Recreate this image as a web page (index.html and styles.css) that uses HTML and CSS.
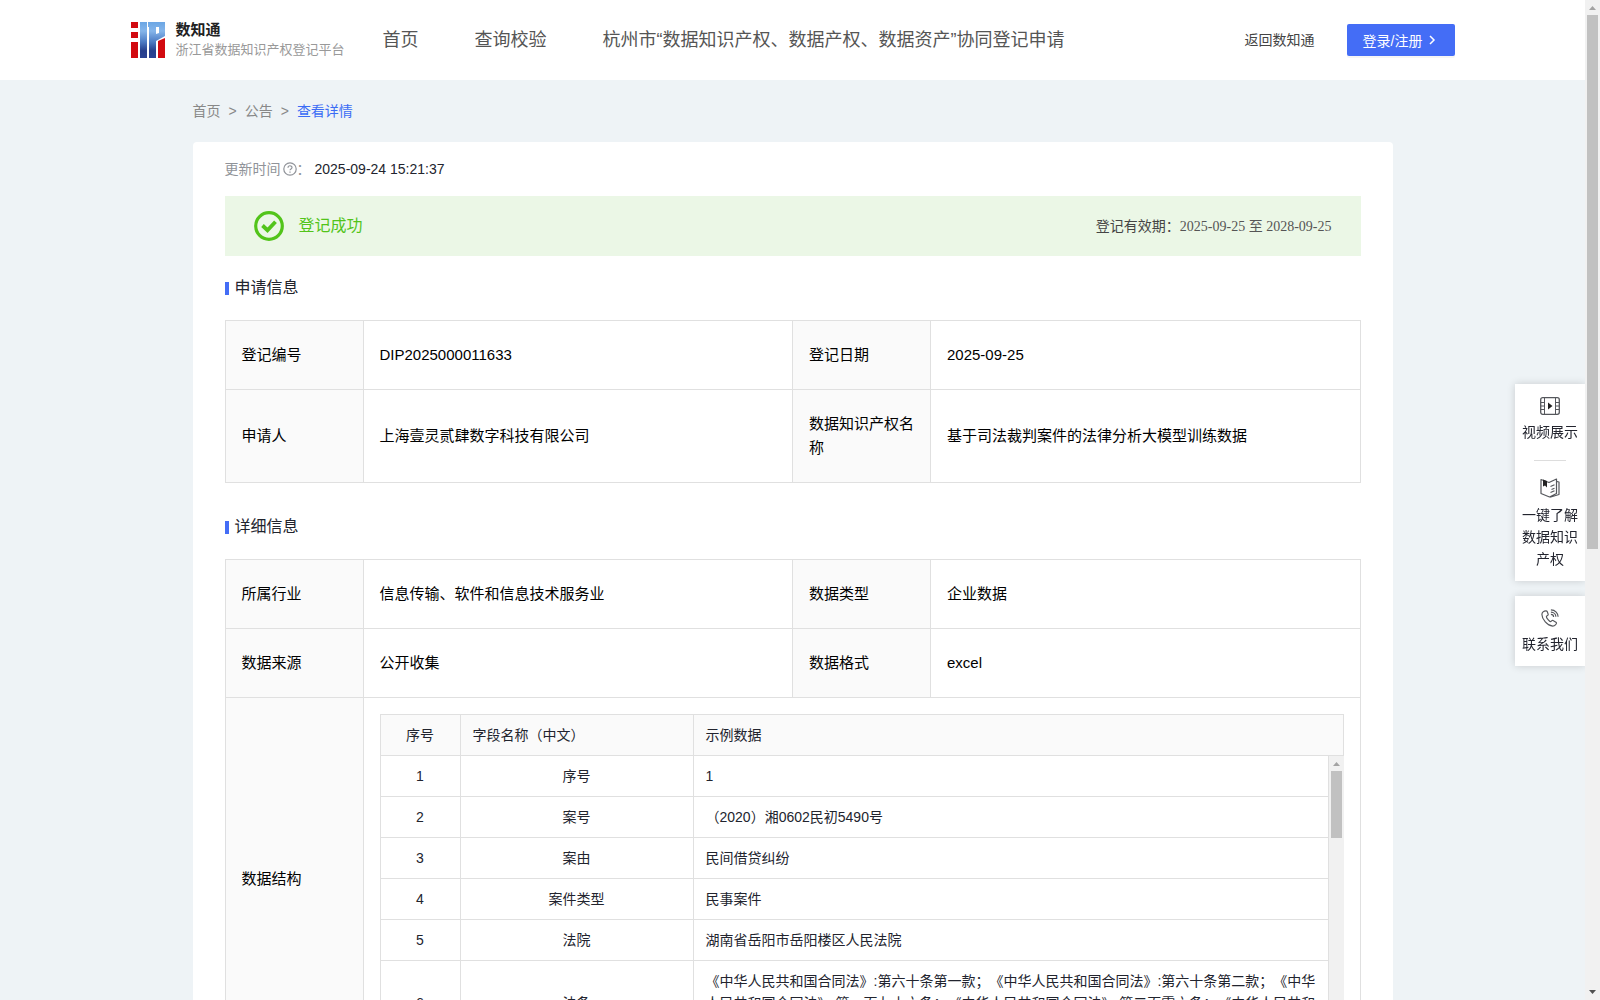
FILE: index.html
```html
<!DOCTYPE html>
<html lang="zh-CN">
<head>
    <meta charset="UTF-8">
    <meta name="viewport" content="width=device-width, initial-scale=1.0">
    <title>数知通</title>
    <link rel="stylesheet" href="styles.css">
</head>
<body>
    <div class="page">
        <header class="header">
            <div class="header-inner">
                <a class="logo" href="#">
                    <svg width="34" height="36" viewBox="0 0 34 36">
                        <defs>
                            <linearGradient id="logoBlue" x1="0" y1="0" x2="0" y2="1">
                                <stop offset="0" stop-color="#6ba6e4"/>
                                <stop offset="0.25" stop-color="#85b5ea"/>
                                <stop offset="0.55" stop-color="#4d7cc4"/>
                                <stop offset="0.8" stop-color="#263f8c"/>
                                <stop offset="1" stop-color="#2b4394"/>
                            </linearGradient>
                        </defs>
                        <path fill="#d20a10" d="M0 0h7v6H0zM0 10h7v6H0zM0 20h7v16H0zM27 19l7-3v20h-7z"/>
                        <path fill="url(#logoBlue)" fill-rule="evenodd" d="M9 0h7v36H9zM17 0h17v14l-9 5v17h-7V5h-1zM25 5v7l3-1V5z"/>
                    </svg>
                    <span class="logo-text">
                        <strong>数知通</strong>
                        <span>浙江省数据知识产权登记平台</span>
                    </span>
                </a>
                <nav class="nav">
                    <a href="#">首页</a>
                    <a href="#">查询校验</a>
                    <a href="#">杭州市“数据知识产权、数据产权、数据资产”协同登记申请</a>
                </nav>
                <a class="back-link" href="#">返回数知通</a>
                <button class="login-btn" type="button">
                    登录/注册
                    <svg width="12" height="12" viewBox="0 0 12 12" fill="none" stroke="#fff" stroke-width="1.5"><path d="M4 2l4 4-4 4"/></svg>
                </button>
            </div>
        </header>

        <main class="container">
            <nav class="breadcrumb">
                <a href="#">首页</a>
                <span>&gt;</span>
                <a href="#">公告</a>
                <span>&gt;</span>
                <a class="current" href="#">查看详情</a>
            </nav>

            <div class="card">
                <div class="update-time">
                    <span>更新时间</span>
                    <svg width="14" height="14" viewBox="0 0 14 14" fill="none" stroke="#909399" stroke-width="1.2"><circle cx="7" cy="7" r="6.2"/><path d="M5 5.7c0-2.6 4-2.5 4-.2 0 1.4-2 1.4-2 2.8M7 9.4v1.4"/></svg>
                    <span>：</span>
                    <time>2025-09-24 15:21:37</time>
                </div>

                <div class="banner">
                    <svg width="30" height="30" viewBox="0 0 30 30" fill="none" stroke="#52c41a"><circle cx="15" cy="15" r="13.3" stroke-width="3.2"/><path d="M8.500 14.500l5 4.700 8-8.400" stroke-width="3.8"/></svg>
                    <span class="banner-status">登记成功</span>
                    <span class="banner-date">登记有效期：<span class="serif">2025-09-25 至 2028-09-25</span></span>
                </div>

                <h2 class="section-title">申请信息</h2>
                <table class="info-table">
                    <colgroup><col class="col-label"><col><col class="col-label"><col></colgroup>
                    <tr>
                        <th>登记编号</th>
                        <td>DIP2025000011633</td>
                        <th>登记日期</th>
                        <td>2025-09-25</td>
                    </tr>
                    <tr>
                        <th>申请人</th>
                        <td>上海壹灵贰肆数字科技有限公司</td>
                        <th>数据知识产权名称</th>
                        <td>基于司法裁判案件的法律分析大模型训练数据</td>
                    </tr>
                </table>

                <h2 class="section-title">详细信息</h2>
                <table class="info-table">
                    <colgroup><col class="col-label"><col><col class="col-label"><col></colgroup>
                    <tr>
                        <th>所属行业</th>
                        <td>信息传输、软件和信息技术服务业</td>
                        <th>数据类型</th>
                        <td>企业数据</td>
                    </tr>
                    <tr>
                        <th>数据来源</th>
                        <td>公开收集</td>
                        <th>数据格式</th>
                        <td>excel</td>
                    </tr>
                    <tr>
                        <th>数据结构</th>
                        <td class="nested" colspan="3">
                            <table class="data-table">
                                <colgroup><col class="col-no"><col class="col-field"><col></colgroup>
                                <thead>
                                    <tr><th class="center">序号</th><th>字段名称（中文）</th><th>示例数据</th></tr>
                                </thead>
                            </table>
                            <div class="data-body">
                                <div class="data-rows">
                                    <table class="data-table">
                                        <colgroup><col class="col-no"><col class="col-field"><col></colgroup>
                                        <tbody>
                                            <tr><td>1</td><td>序号</td><td>1</td></tr>
                                            <tr><td>2</td><td>案号</td><td>（2020）湘0602民初5490号</td></tr>
                                            <tr><td>3</td><td>案由</td><td>民间借贷纠纷</td></tr>
                                            <tr><td>4</td><td>案件类型</td><td>民事案件</td></tr>
                                            <tr><td>5</td><td>法院</td><td>湖南省岳阳市岳阳楼区人民法院</td></tr>
                                            <tr><td>6</td><td>法条</td><td>《中华人民共和国合同法》:第六十条第一款；《中华人民共和国合同法》:第六十条第二款；《中华人民共和国合同法》:第一百九十六条；《中华人民共和国合同法》:第二百零六条；《中华人民共和国合同法》:第二百零七条</td></tr>
                                        </tbody>
                                    </table>
                                </div>
                                <div class="scrollbar" aria-hidden="true">
                                    <svg width="7" height="4" viewBox="0 0 7 4" fill="#a3a3a3"><path d="M0 4h7L3.500 0z"/></svg>
                                    <div class="track"><div class="thumb thumb-data"></div></div>
                                    <svg width="7" height="4" viewBox="0 0 7 4" fill="#505050"><path d="M0 0h7L3.500 4z"/></svg>
                                </div>
                            </div>
                        </td>
                    </tr>
                </table>
            </div>
        </main>
    </div>

    <div class="scrollbar" aria-hidden="true">
        <svg width="7" height="4" viewBox="0 0 7 4" fill="#a3a3a3"><path d="M0 4h7L3.500 0z"/></svg>
        <div class="track"><div class="thumb thumb-page"></div></div>
        <svg width="7" height="4" viewBox="0 0 7 4" fill="#505050"><path d="M0 0h7L3.500 4z"/></svg>
    </div>

    <aside class="side-tools">
        <div class="side-group">
            <a href="#">
                <svg width="20" height="18" viewBox="0 0 20 18" fill="none" stroke="#55575c"><rect x="0.7" y="0.7" width="18.6" height="16.6" rx="2" stroke-width="1.3"/><path d="M4.5 1v16M15.5 1v16M1 5.5h3.5M1 9h3.5M1 12.5h3.5M15.5 5.5H19M15.5 9H19M15.5 12.5H19"/><path d="M8 5.5v7l4.500-3.500z" fill="#222" stroke="none"/></svg>
                <span>视频展示</span>
            </a>
            <hr>
            <a href="#">
                <svg width="20" height="20" viewBox="0 0 20 20" fill="none" stroke="#55575c" stroke-width="1.2" stroke-linejoin="round"><path d="M1 1.500l8 3 7.500-3.500v14.500L9.500 19 1 15.500zM17 3.500l2 .5v12.500L10 19.300"/><path d="M10.500 8.500l4-1.700M11.500 11.500l3-1.200M10.500 14.500l4-1.700"/><path d="M3 1.500l4 1.500v6.500L5 7.500 3 8.500z" fill="#222" stroke="none"/></svg>
                <span>一键了解数据知识产权</span>
            </a>
        </div>
        <div class="side-group">
            <a href="#">
                <svg width="18" height="18" viewBox="0 0 20 20" fill="none" stroke="#55575c" stroke-width="1.3"><path d="M5.500 2C3 2 1 4 1 6c0 5 6 12.500 12 13 2.500 0 5-3 4-4l-4-2.500c-1 0-1.500 1.500-2.500 1.500S6 10 6 8.500C6.200 7.500 8 7.500 8 6L7 3C6.700 2.200 6.200 2 5.500 2z"/><path d="M11 1c5 0 8 4 8 7.500M11 3.500c3.500 0 5.500 2.500 5.500 5M11 6c2 0 3 1.500 3 3"/></svg>
                <span>联系我们</span>
            </a>
        </div>
    </aside>
</body>
</html>
```
FILE: styles.css
```css
* {
    box-sizing: border-box;
}
body {
    display: flex;
    height: 100vh;
    margin: 0;
    background-color: #eef3f6;
    color: #22242e;
    font-family: "Liberation Sans", "Noto Sans CJK SC", sans-serif;
    font-size: 14px;
    line-height: 22px;
    text-spacing-trim: space-all;
}
a {
    color: inherit;
    text-decoration: none;
}
svg {
    flex: none;
}
.page {
    flex: 1;
    min-width: 0;
    overflow-y: auto;
    scrollbar-width: none;
}
.header {
    background-color: #fff;
}
.header-inner {
    display: flex;
    align-items: center;
    max-width: 1324px;
    height: 80px;
    margin: 0 auto;
}
.logo {
    display: flex;
    align-items: center;
    gap: 11px;
}
.logo-text {
    display: flex;
    flex-direction: column;
    font-size: 13px;
    line-height: 20px;
    color: #999;
}
.logo-text strong {
    font-size: 15px;
    color: #222;
}
.nav {
    display: flex;
    flex: 1;
    gap: 56px;
    margin-left: 38px;
    font-size: 18px;
    color: #555;
}
.back-link {
    color: #444;
}
.login-btn {
    display: flex;
    align-items: center;
    gap: 3px;
    height: 32px;
    margin-left: 32px;
    padding: 0 17px 0 16px;
    border: none;
    border-radius: 2px;
    background-color: #446df6;
    box-shadow: 0 2px 0 rgba(0, 0, 0, 0.04);
    color: #fff;
    font-family: inherit;
    font-size: 14px;
    cursor: pointer;
}
.container {
    max-width: 1200px;
    margin: 0 auto;
}
.breadcrumb {
    display: flex;
    gap: 8px;
    padding: 20px 0;
    color: #888;
}
.breadcrumb .current {
    color: #3b6cf5;
}
.card {
    padding: 16px 32px 32px;
    border-radius: 4px;
    background-color: #fff;
}
.update-time {
    display: flex;
    align-items: center;
    color: #909399;
}
.update-time svg {
    margin-left: 2px;
}
.update-time time {
    margin-left: 4px;
    color: #22242e;
}
.banner {
    display: flex;
    align-items: center;
    height: 60px;
    margin-top: 16px;
    padding: 0 29px;
    background-color: #ebf7e6;
}
.banner-status {
    flex: 1;
    margin-left: 15px;
    font-size: 16px;
    color: #52c41a;
}
.banner-date {
    color: #444;
}
.serif {
    color: #555;
    font-family: "Liberation Serif", "Noto Sans CJK SC", serif;
}
.section-title {
    display: flex;
    align-items: center;
    gap: 6px;
    margin: 20px 0;
    font-size: 16px;
    font-weight: normal;
    line-height: 24px;
}
.section-title::before {
    content: "";
    width: 4px;
    height: 13px;
    background-color: #446df6;
}
.info-table + .section-title {
    margin-top: 32px;
}
table {
    width: 100%;
    border-collapse: collapse;
    table-layout: fixed;
}
th {
    background-color: #fafafa;
    font-weight: normal;
    text-align: left;
}
.info-table {
    color: #000;
    font-size: 15px;
    line-height: 24px;
}
.info-table th, .info-table td {
    padding: 22px 16px;
    border: 1px solid #e0e0e0;
}
.col-label {
    width: 138px;
}
.info-table .nested {
    padding: 16px;
}
.data-table {
    color: #22242e;
    font-size: 14px;
    line-height: 22px;
}
.info-table .data-table th, .info-table .data-table td {
    padding: 9px 12px;
}
.data-table .center, .data-table td:nth-child(-n+2) {
    text-align: center;
}
.info-table .data-table tbody tr:first-child td {
    border-top: none;
}
.col-no {
    width: 80px;
}
.col-field {
    width: 233px;
}
.data-body {
    display: flex;
    height: 288px;
}
.data-rows {
    flex: 1;
    min-width: 0;
    overflow-y: auto;
    scrollbar-width: none;
}
.scrollbar {
    display: flex;
    flex: none;
    flex-direction: column;
    align-items: center;
    gap: 5px;
    width: 15px;
    padding: 6px 0;
    background-color: #f1f1f1;
}
.track {
    flex: 1;
    width: 11px;
}
.thumb {
    background-color: #c1c1c1;
}
.thumb-page {
    height: 55%;
}
.thumb-data {
    height: 26%;
}
.side-tools {
    position: fixed;
    top: 384px;
    right: 15px;
    display: flex;
    flex-direction: column;
    gap: 15px;
    width: 70px;
    text-align: center;
    clip-path: inset(-12px 0 -12px -12px);
}
.side-group {
    padding: 13px 7px 11px;
    background-color: #fff;
    box-shadow: 0 0 8px rgba(0, 0, 0, 0.16);
}
.side-group a {
    display: flex;
    flex-direction: column;
    align-items: center;
    gap: 6px;
}
.side-group hr {
    width: 32px;
    margin: 17px auto;
    border: none;
    border-top: 1px solid #ddd;
}
```
